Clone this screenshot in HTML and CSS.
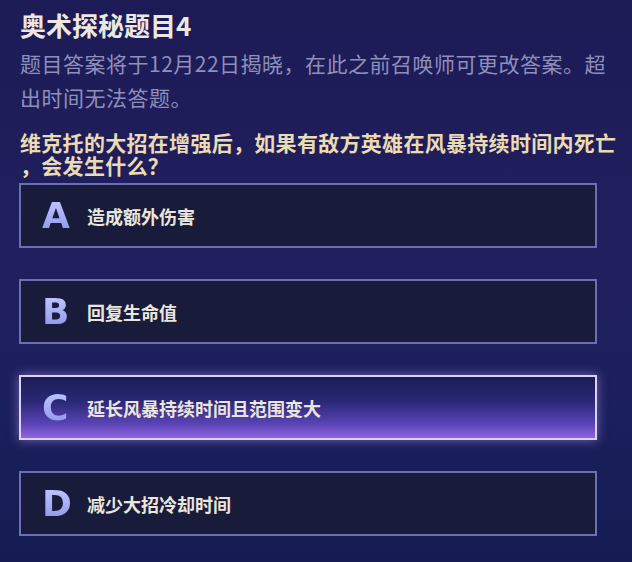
FILE: index.html
```html
<!DOCTYPE html>
<html lang="zh-CN">
<head>
    <meta charset="UTF-8">
    <meta name="viewport" content="width=device-width, initial-scale=1.0">
    <title>奥术探秘题目4</title>
    <link rel="stylesheet" href="styles.css">
</head>
<body>
    <div class="quiz">
        <h1 class="title">奥术探秘题目4</h1>
        <p class="desc">题目答案将于12月22日揭晓，在此之前召唤师可更改答案。超<br>出时间无法答题。</p>
        <p class="question">维克托的大招在增强后，如果有敌方英雄在风暴持续时间内死亡<br>，会发生什么？</p>

        <ul class="options">
            <li class="option"><span class="letter">A</span><span class="label">造成额外伤害</span></li>
            <li class="option"><span class="letter">B</span><span class="label">回复生命值</span></li>
            <li class="option selected"><span class="letter">C</span><span class="label">延长风暴持续时间且范围变大</span></li>
            <li class="option"><span class="letter">D</span><span class="label">减少大招冷却时间</span></li>
        </ul>
    </div>
</body>
</html>
```

FILE: styles.css
```css
html, body {
    margin: 0;
    padding: 0;
    height: 100%;
}
body {
    font-family: "Noto Sans CJK SC", "Noto Sans", sans-serif;
    background: linear-gradient(180deg, #1c1b56 0%, #21205f 45%, #1b1f5c 75%, #141c52 100%);
    color: #e9e5dc;
    overflow: hidden;
}
.quiz {
    padding: 9px 20px 0 20px;
}
.title {
    margin: 0;
    font-size: 26px;
    line-height: 32px;
    font-weight: 700;
    color: #ece8e0;
}
.desc {
    margin: 5px 0 0;
    font-size: 21px;
    line-height: 34px;
    letter-spacing: 0.5px;
    color: #8f8fbc;
    white-space: nowrap;
}
.question {
    margin: 17px 0 0;
    font-size: 21px;
    line-height: 23px;
    letter-spacing: 0.3px;
    font-weight: 700;
    color: #eadbb2;
    white-space: nowrap;
}
.options {
    list-style: none;
    margin: 6px 0 0 -1px;
    padding: 0;
    width: 578px;
    display: flex;
    flex-direction: column;
    gap: 31px;
}
.option {
    box-sizing: border-box;
    height: 65px;
    display: flex;
    align-items: center;
    padding-left: 21px;
    background: #191b3b;
    border: 2px solid #6c6fb4;
}
.option.selected {
    background: linear-gradient(180deg, #1b1d55 0%, #2a2876 40%, #5742b2 75%, #9064e0 100%);
    border-color: #dcd2f8;
    box-shadow: 0 0 10px rgba(190, 160, 255, 0.55);
}
.letter {
    width: 45px;
    font-family: "DejaVu Sans", sans-serif;
    font-size: 36px;
    line-height: 40px;
    font-weight: 700;
    background: linear-gradient(180deg, #c4cbff 0%, #8a92ea 100%);
    -webkit-background-clip: text;
    background-clip: text;
    color: transparent;
}
.label {
    font-size: 18px;
    font-weight: 700;
    color: #ebe6dc;
}
```
